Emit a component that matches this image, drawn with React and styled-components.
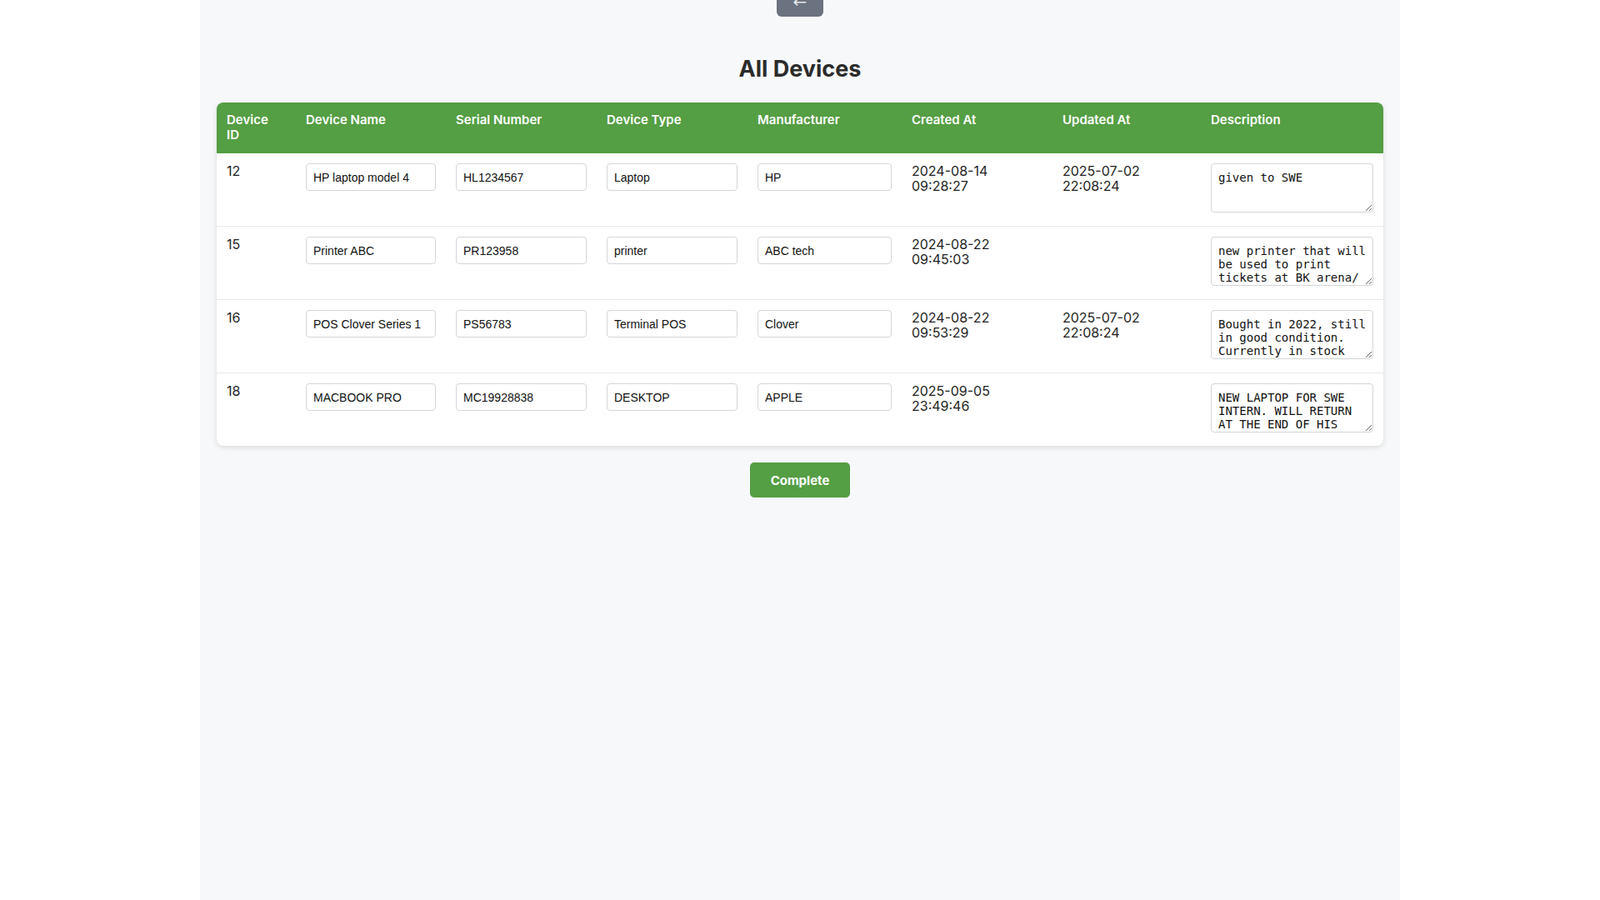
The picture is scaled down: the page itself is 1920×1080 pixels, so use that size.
import React from "react";
import styled, { createGlobalStyle } from "styled-components";

const devices = [
    { id: 12, name: "HP laptop model 4", serial: "HL1234567", type: "Laptop", manufacturer: "HP", created: ["2024-08-14", "09:28:27"], updated: ["2025-07-02", "22:08:24"], description: "given to SWE" },
    { id: 15, name: "Printer ABC", serial: "PR123958", type: "printer", manufacturer: "ABC tech", created: ["2024-08-22", "09:45:03"], updated: null, description: "new printer that will be used to print tickets at BK arena/ events" },
    { id: 16, name: "POS Clover Series 1", serial: "PS56783", type: "Terminal POS", manufacturer: "Clover", created: ["2024-08-22", "09:53:29"], updated: ["2025-07-02", "22:08:24"], description: "Bought in 2022, still in good condition. Currently in stock" },
    { id: 18, name: "MACBOOK PRO", serial: "MC19928838", type: "DESKTOP", manufacturer: "APPLE", created: ["2025-09-05", "23:49:46"], updated: null, description: "NEW LAPTOP FOR SWE INTERN. WILL RETURN AT THE END OF HIS INTERNSHIP" },
];

const columns = [
    { label: "Device ID", width: 95, narrow: true },
    { label: "Device Name", width: 180 },
    { label: "Serial Number", width: 181 },
    { label: "Device Type", width: 181 },
    { label: "Manufacturer", width: 185 },
    { label: "Created At", width: 181 },
    { label: "Updated At", width: 178 },
    { label: "Description", width: 219 },
];

const GlobalStyle = createGlobalStyle`
    body{
        margin: 0;
        background: #ffffff;
        font-family: Inter, "Liberation Sans", sans-serif;
    }
`;

const App = () => {
    return (
        <>
            <GlobalStyle />
            <Page>
                <BackButton>←</BackButton>
                <Title>All Devices</Title>
                <TableCard>
                    <Table>
                        <colgroup>
                            {columns.map((c) => (
                                <col key={c.label} style={{ width: c.width }} />
                            ))}
                        </colgroup>
                        <thead>
                            <tr>
                                {columns.map((c) => (
                                    <HeadCell key={c.label} $narrow={c.narrow}>{c.label}</HeadCell>
                                ))}
                            </tr>
                        </thead>
                        <tbody>
                            {devices.map((d, i) => (
                                <Row key={d.id} $last={i === devices.length - 1}>
                                    <Cell>{d.id}</Cell>
                                    <Cell><Field defaultValue={d.name} /></Cell>
                                    <Cell><Field defaultValue={d.serial} /></Cell>
                                    <Cell><Field defaultValue={d.type} /></Cell>
                                    <Cell><Field defaultValue={d.manufacturer} /></Cell>
                                    <Cell>{d.created[0]}<br />{d.created[1]}</Cell>
                                    <Cell>{d.updated && <>{d.updated[0]}<br />{d.updated[1]}</>}</Cell>
                                    <Cell><Notes defaultValue={d.description} /></Cell>
                                </Row>
                            ))}
                        </tbody>
                    </Table>
                </TableCard>
                <Actions>
                    <CompleteButton>Complete</CompleteButton>
                </Actions>
            </Page>
        </>
    );
};

const Page = styled.div`
    width: 1440px;
    min-height: 100vh;
    margin: 0 auto;
    padding: 0 20px 20px;
    box-sizing: border-box;
    background: #f7f8fa;
    display: flex;
    flex-direction: column;
    align-items: center;
`;

const BackButton = styled.button`
    width: 56px;
    height: 36px;
    margin-top: -16px;
    border: none;
    border-radius: 6px;
    background: #6b7280;
    color: #e5e7eb;
    font-size: 20px;
    line-height: 1;
    padding: 0;
    display: flex;
    align-items: center;
    justify-content: center;
    font-family: "DejaVu Sans", sans-serif;
    cursor: pointer;
`;

const Title = styled.h1`
    margin: 46px 0 23px;
    font-family: Inter, sans-serif;
    font-size: 27px;
    font-weight: 700;
    line-height: 34px;
    color: #2b2b2b;
`;

const TableCard = styled.div`
    width: 100%;
    background: #ffffff;
    border-radius: 8px;
    overflow: hidden;
    box-shadow: 0 2px 6px rgba(0, 0, 0, 0.12);
`;

const Table = styled.table`
    width: 100%;
    table-layout: fixed;
    border-collapse: collapse;
`;

const HeadCell = styled.th`
    background: #549e43;
    color: #ffffff;
    text-align: left;
    vertical-align: top;
    padding: 12px ${(p) => (p.$narrow ? "24px" : "12px")} 12px 12px;
    height: 61px;
    box-sizing: border-box;
    font-family: Inter, sans-serif;
    font-size: 15px;
    font-weight: 600;
    line-height: 18px;
`;

const Row = styled.tr`
    border-bottom: ${(p) => (p.$last ? "none" : "1px solid #e6e8eb")};
`;

const Cell = styled.td`
    padding: 12px 12px 16px;
    vertical-align: top;
    font-family: Inter, sans-serif;
    font-size: 16px;
    line-height: 18px;
    color: #1f1f1f;
`;

const Field = styled.input`
    display: block;
    width: 100%;
    box-sizing: border-box;
    height: 33px;
    padding: 0 8px;
    border: 1px solid #d4d6da;
    border-radius: 4px;
    background: #ffffff;
    font-family: "Liberation Sans", Arial, sans-serif;
    font-size: 14px;
    color: #111111;
    outline: none;
`;

const Notes = styled.textarea`
    display: block;
    width: 100%;
    box-sizing: border-box;
    height: 59px;
    padding: 8px 6px 8px 8px;
    border: 1px solid #d4d6da;
    border-radius: 4px;
    background: #ffffff;
    font-family: "DejaVu Sans Mono", monospace;
    font-size: 14px;
    line-height: 16px;
    color: #111111;
    overflow: hidden;
    resize: vertical;
    outline: none;
`;

const Actions = styled.div`
    margin-top: 20px;
    display: flex;
    justify-content: center;
`;

const CompleteButton = styled.button`
    width: 120px;
    height: 42px;
    border: none;
    border-radius: 5px;
    background: #549e43;
    color: #ffffff;
    font-family: Inter, sans-serif;
    font-size: 15px;
    font-weight: 700;
    cursor: pointer;
`;

export default App;
